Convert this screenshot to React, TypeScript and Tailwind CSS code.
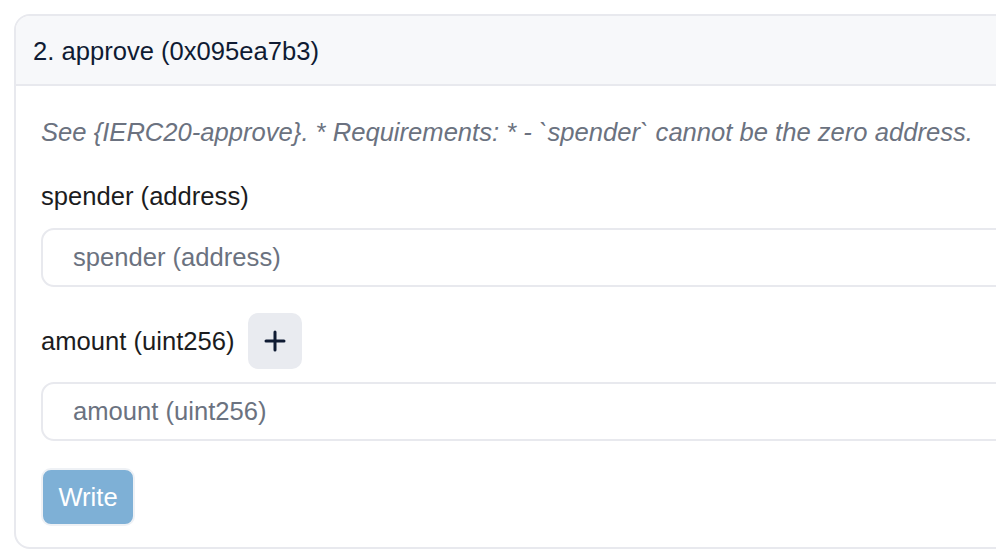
// @ts-nocheck

const inputs = [
    { name: 'spender', type: 'address', canAdd: false },
    { name: 'amount', type: 'uint256', canAdd: true },
];

const PlusIcon = () => (
    <svg width="22" height="22" viewBox="0 0 22 22" fill="none" stroke="#0f1b33" strokeWidth="3" strokeLinecap="round">
        <path d="M11 2v18M2 11h18" />
    </svg>
);

const App = () => {
    return (
        <div
            className="w-[996px] h-[552px] overflow-hidden bg-white pl-[14px] pt-[14px]"
            style={{ fontFamily: '"Liberation Sans", Arial, Helvetica, sans-serif' }}
        >
            <div className="w-[1040px] rounded-[16px] border-2 border-[#e8e9ee] overflow-hidden">
                <div className="h-[70px] flex items-center px-[17px] pt-[3px] bg-[#f7f8fa] border-b-2 border-[#e8e9ee]">
                    <span className="text-[25.6px] text-[#0f1b33] leading-none">2. approve (0x095ea7b3)</span>
                </div>

                <div className="px-[25px] pt-[27px] pb-[21px] flex flex-col">
                    <p className="text-[25.6px] leading-[38px] italic text-[#6b7280]">
                        See {'{IERC20-approve}'}. * Requirements: * - `spender` cannot be the zero address.
                    </p>

                    {inputs.map((inp, i) => (
                        <div key={i} className="flex flex-col mt-[26px]">
                            <div className="flex items-center gap-[13px] min-h-[38px]">
                                <span className="text-[25.6px] leading-[38px] text-[#1c1c1e]">
                                    {inp.name} ({inp.type})
                                </span>
                                {inp.canAdd && (
                                    <button className="w-[54px] h-[56px] rounded-[10px] bg-[#e9ebf0] flex items-center justify-center">
                                        <PlusIcon />
                                    </button>
                                )}
                            </div>
                            <input
                                className="mt-[13px] h-[59px] rounded-[13px] border-2 border-[#e8e9ee] pl-[30px] text-[25.6px] outline-none placeholder:text-[#6b7280]"
                                placeholder={`${inp.name} (${inp.type})`}
                            />
                        </div>
                    ))}

                    <div className="mt-[27px]">
                        <button className="w-[94px] h-[58px] rounded-[10px] bg-[#7eb0d6] border-2 border-[#eef1f5] text-white text-[25.6px]">
                            Write
                        </button>
                    </div>
                </div>
            </div>
        </div>
    );
};

export default App;
